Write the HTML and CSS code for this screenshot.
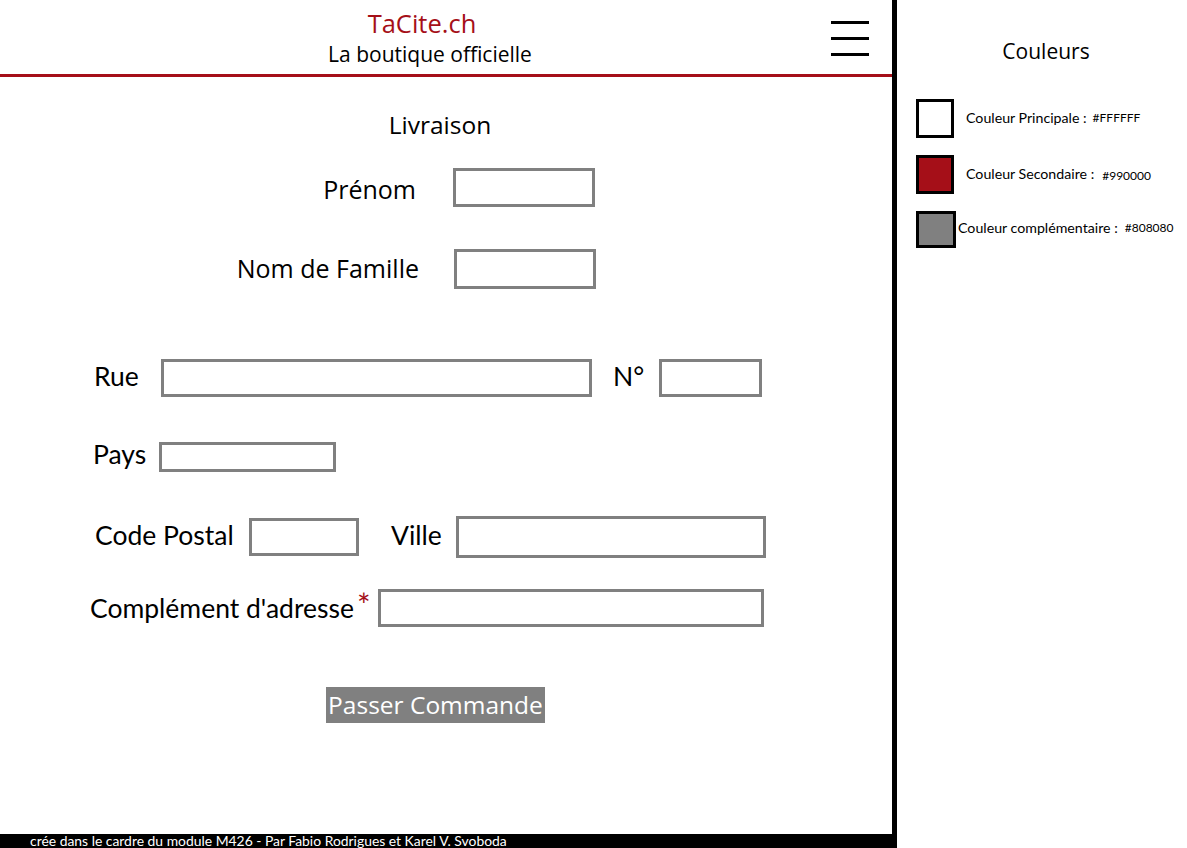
FILE: index.html
```html
<!DOCTYPE html>
<html lang="fr">
<head>
<meta charset="utf-8">
<title>TaCite.ch - Livraison</title>
<link rel="stylesheet" href="styles.css">
</head>
<body>
<div class="page">
  <div class="main">
    <header class="header">
      <div class="brand">
        <div class="brand-name">TaCite.ch</div>
        <div class="brand-sub">La boutique officielle</div>
      </div>
      <div class="burger" aria-label="menu">
        <span></span><span></span><span></span>
      </div>
    </header>

    <form class="form">
      <h1 class="form-title">Livraison</h1>

      <div class="row row-center row-prenom">
        <label class="lbl-right">Prénom</label>
        <input class="field f-prenom" type="text">
      </div>

      <div class="row row-center row-nom">
        <label class="lbl-right">Nom de Famille</label>
        <input class="field f-nom" type="text">
      </div>

      <div class="row row-rue">
        <label class="lbl l-rue">Rue</label>
        <input class="field f-rue" type="text">
        <label class="lbl l-no">N°</label>
        <input class="field f-no" type="text">
      </div>

      <div class="row row-pays">
        <label class="lbl l-pays">Pays</label>
        <input class="field f-pays" type="text">
      </div>

      <div class="row row-cp">
        <label class="lbl l-cp">Code Postal</label>
        <input class="field f-cp" type="text">
        <label class="lbl l-ville">Ville</label>
        <input class="field f-ville" type="text">
      </div>

      <div class="row row-compl">
        <label class="lbl l-compl">Complément d'adresse<span class="req">*</span></label>
        <input class="field f-compl" type="text">
      </div>

      <div class="actions">
        <button class="submit" type="button">Passer Commande</button>
      </div>
    </form>

    <footer class="footer">crée dans le cardre du module M426 - Par Fabio Rodrigues et Karel V. Svoboda</footer>
  </div>

  <aside class="side">
    <h2 class="side-title">Couleurs</h2>
    <ul class="swatches">
      <li class="swatch-row sw-1">
        <span class="swatch sw-white"></span>
        <span class="sw-name">Couleur Principale :</span>
        <span class="sw-hex">#FFFFFF</span>
      </li>
      <li class="swatch-row sw-2">
        <span class="swatch sw-red"></span>
        <span class="sw-name">Couleur Secondaire :</span>
        <span class="sw-hex hex-low">#990000</span>
      </li>
      <li class="swatch-row sw-3">
        <span class="swatch sw-gray"></span>
        <span class="sw-name">Couleur complémentaire :</span>
        <span class="sw-hex">#808080</span>
      </li>
    </ul>
  </aside>
</div>
</body>
</html>
```

FILE: styles.css
```css
* { box-sizing: border-box; }

html, body {
  margin: 0;
  padding: 0;
  background: #ffffff;
}

body {
  font-family: "Open Sans", "Noto Sans", sans-serif;
  color: #000;
  width: 1187px;
  height: 848px;
  overflow: hidden;
}

.page {
  display: flex;
  height: 848px;
}

/* ---------- main column ---------- */
.main {
  width: 897px;
  flex: 0 0 897px;
  border-right: 5px solid #000;
  display: flex;
  flex-direction: column;
}

.header {
  height: 77px;
  border-bottom: 3px solid #a50f18;
  display: flex;
  align-items: flex-start;
}

.brand {
  width: 420px;
  margin-left: 212px;
  text-align: center;
  padding-top: 7px;
}

.brand-name {
  color: #a50f18;
  font-size: 25.5px;
  line-height: 32px;
}

.brand-sub {
  font-size: 21px;
  line-height: 26px;
  margin-top: 2px;
  padding-left: 16px;
  white-space: nowrap;
}

.burger {
  margin-left: 199px;
  margin-top: 21px;
  width: 38px;
  display: flex;
  flex-direction: column;
  gap: 13px;
}

.burger span {
  display: block;
  height: 3px;
  background: #000;
}

/* ---------- form ---------- */
.form {
  display: flex;
  flex-direction: column;
}

.form-title {
  margin: 33px 0 0;
  padding-right: 12px;
  text-align: center;
  font-size: 24.5px;
  font-weight: normal;
  line-height: 30px;
}

.row {
  display: flex;
  align-items: center;
}

.lbl-right {
  text-align: right;
  font-size: 25px;
  line-height: 30px;
  white-space: nowrap;
}

.row-prenom { margin-top: 28px; height: 38px; }
.row-prenom .lbl-right { width: 416px; margin-top: 4px; }
.row-prenom .field { margin-left: 37px; }

.row-nom { margin-top: 43px; height: 39px; }
.row-nom .lbl-right { width: 419px; margin-bottom: 2px; }
.row-nom .field { margin-left: 35px; }

.field {
  border: 3px solid #808080;
  background: #fff;
  padding: 0;
  margin: 0;
  font: inherit;
  outline: none;
}

.f-prenom { width: 142px; height: 39px; }
.f-nom { width: 142px; height: 40px; }

.lbl {
  font-family: "Lato", "Open Sans", sans-serif;
  font-size: 26.5px;
  line-height: 30px;
  margin-bottom: 4px;
  white-space: nowrap;
}

.row-rue { margin-top: 71px; height: 38px; }
.l-rue { margin-left: 94px; width: 67px; }
.f-rue { width: 431px; height: 38px; }
.l-no { margin-left: 21px; width: 46px; }
.f-no { width: 103px; height: 38px; }

.row-pays { margin-top: 45px; height: 30px; }
.l-pays { margin-left: 93px; width: 66px; margin-bottom: 6px; }
.f-pays { width: 177px; height: 30px; }

.row-cp { margin-top: 44px; height: 41px; }
.l-cp { margin-left: 95px; width: 154px; }
.f-cp { width: 110px; height: 38px; }
.l-ville { margin-left: 32px; width: 65px; }
.f-ville { width: 310px; height: 42px; }

.row-compl { margin-top: 32px; height: 38px; }
.l-compl { margin-left: 90px; width: 288px; margin-bottom: 0; }
.req {
  color: #a50f18;
  font-size: 32px;
  line-height: 20px;
  vertical-align: 1px;
  margin-left: 3px;
}
.f-compl { width: 386px; height: 38px; }

.actions {
  margin-top: 60px;
  padding-left: 326px;
}

.submit {
  width: 219px;
  height: 36px;
  background: #808080;
  color: #fff;
  border: 0;
  padding: 0;
  font-family: "Open Sans", "Noto Sans", sans-serif;
  font-size: 24.5px;
  line-height: 36px;
  cursor: pointer;
  white-space: nowrap;
}

.footer {
  margin-top: auto;
  margin-right: -5px;
  height: 14px;
  background: #000;
  color: #fff;
  font-family: "Lato", "Open Sans", sans-serif;
  font-size: 13.9px;
  line-height: 13px;
  padding-left: 30px;
  white-space: nowrap;
}

/* ---------- side panel ---------- */
.side {
  flex: 1 1 auto;
  padding-top: 37px;
}

.side-title {
  margin: 0;
  padding-left: 8px;
  text-align: center;
  font-size: 21px;
  font-weight: normal;
  line-height: 28px;
}

.swatches {
  list-style: none;
  margin: 34px 0 0;
  padding: 0 0 0 19px;
}

.swatch-row {
  display: flex;
  align-items: center;
  font-family: "Lato", "Open Sans", sans-serif;
  white-space: nowrap;
}

.sw-2 { margin-top: 17px; }
.sw-3 { margin-top: 17px; }

.swatch {
  width: 38px;
  height: 39px;
  border: 3px solid #000;
  flex: 0 0 auto;
}

.sw-white { background: #fff; }
.sw-red { background: #a50f18; }
.sw-gray { background: #808080; width: 40px; height: 37px; }

.sw-name {
  font-size: 14.2px;
  margin-left: 12px;
  margin-top: -2px;
}

.sw-3 .sw-name { margin-left: 2px; margin-top: -4px; }

.sw-hex {
  font-size: 12px;
  margin-left: 6px;
  margin-top: -2px;
}

.hex-low { margin-top: 2px; margin-left: 8px; }
.sw-3 .sw-hex { margin-top: -4px; margin-left: 7px; }
```
